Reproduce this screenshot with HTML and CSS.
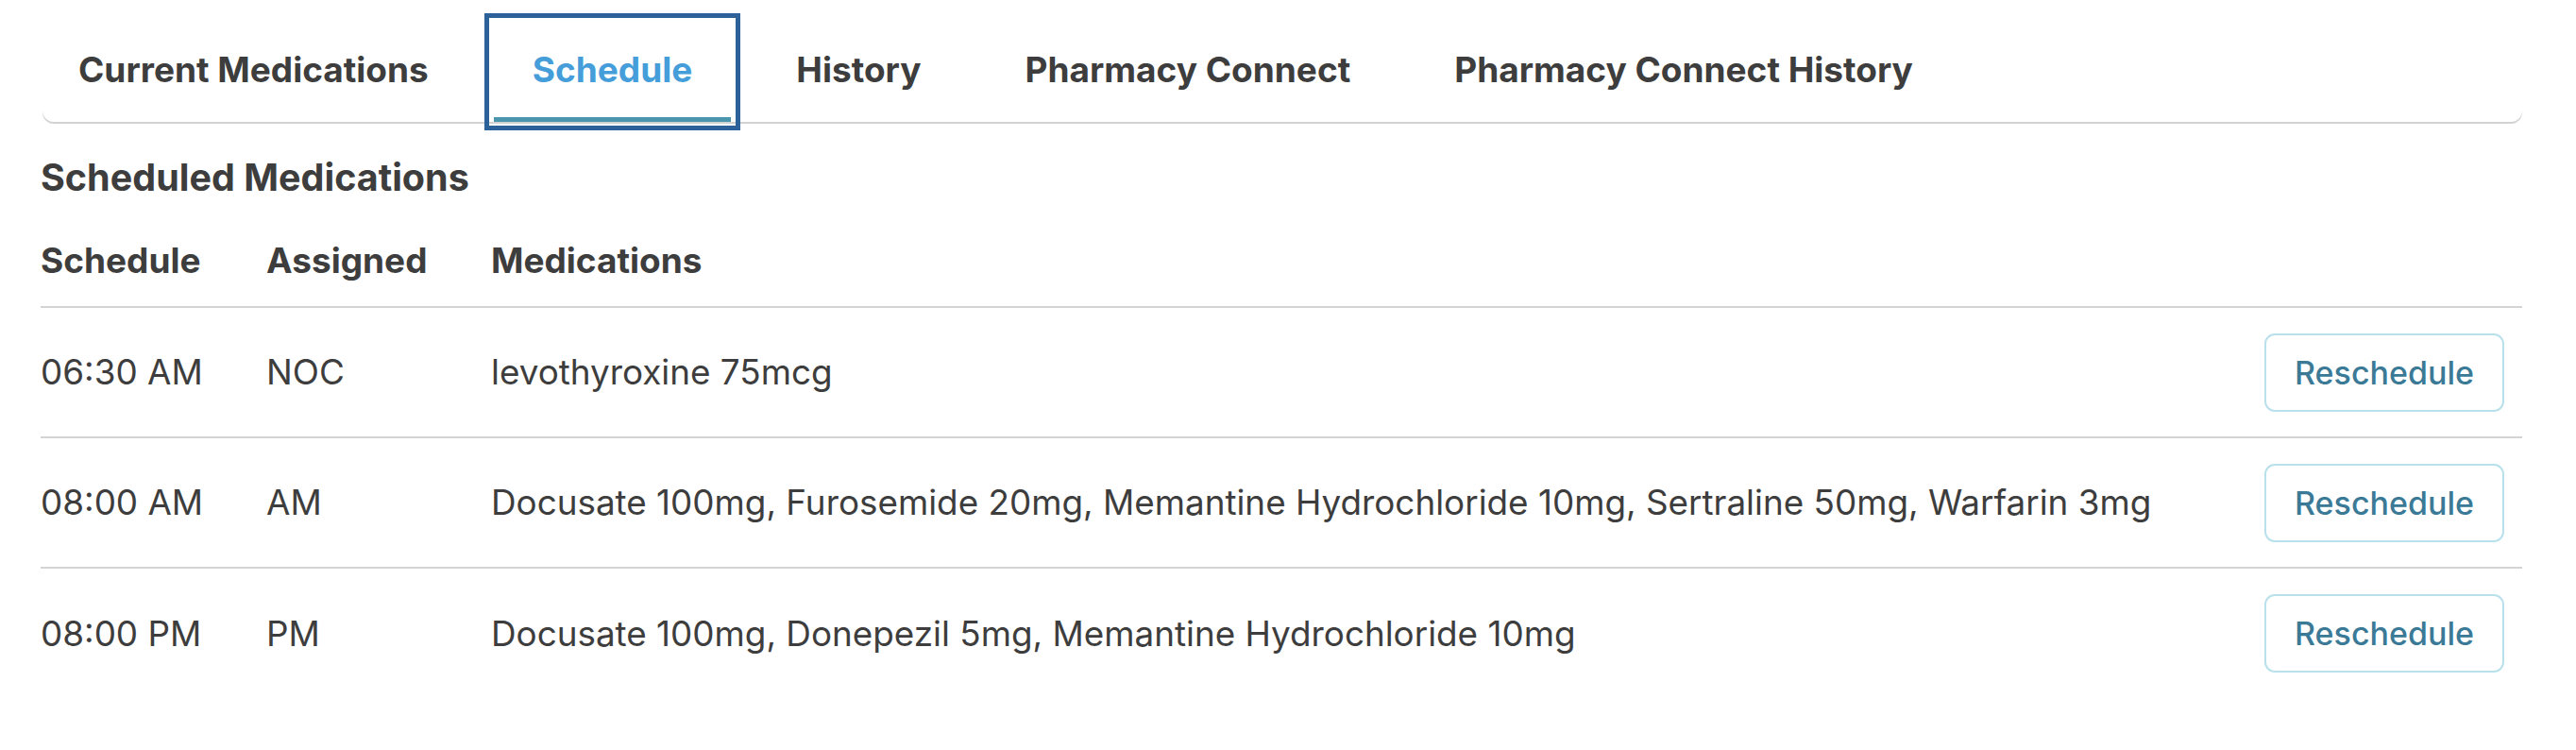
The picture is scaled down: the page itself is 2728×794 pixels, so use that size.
FILE: index.html
```html
<!DOCTYPE html>
<html lang="en">
<head>
<meta charset="utf-8">
<title>Schedule</title>
<link rel="stylesheet" href="styles.css">
</head>
<body>
<div class="page">
  <nav class="tabs">
    <button class="tab">Current Medications</button>
    <button class="tab active">Schedule<span class="tab-bar"></span></button>
    <button class="tab">History</button>
    <button class="tab">Pharmacy Connect</button>
    <button class="tab">Pharmacy Connect History</button>
  </nav>
  <h2 class="section-title">Scheduled Medications</h2>
  <table class="sched">
    <thead>
      <tr>
        <th class="c-time">Schedule</th>
        <th class="c-assigned">Assigned</th>
        <th class="c-meds">Medications</th>
        <th class="c-action"></th>
      </tr>
    </thead>
    <tbody>
      <tr>
        <td>06:30 AM</td>
        <td>NOC</td>
        <td>levothyroxine 75mcg</td>
        <td class="c-action"><button class="btn">Reschedule</button></td>
      </tr>
      <tr>
        <td>08:00 AM</td>
        <td>AM</td>
        <td>Docusate 100mg, Furosemide 20mg, Memantine Hydrochloride 10mg, Sertraline 50mg, Warfarin 3mg</td>
        <td class="c-action"><button class="btn">Reschedule</button></td>
      </tr>
      <tr>
        <td>08:00 PM</td>
        <td>PM</td>
        <td>Docusate 100mg, Donepezil 5mg, Memantine Hydrochloride 10mg</td>
        <td class="c-action"><button class="btn">Reschedule</button></td>
      </tr>
    </tbody>
  </table>
</div>
</body>
</html>
```

FILE: styles.css
```css
* { box-sizing: border-box; }
html, body { margin: 0; padding: 0; background: #ffffff; }
body {
  font-family: Inter, "Noto Sans", sans-serif;
  color: #3d3d3d;
}
.page {
  padding: 19px 57px 40px 43px;
}
.tabs {
  display: flex;
  gap: 18px;
  height: 110px;
  margin-left: 2px;
  border-radius: 0 0 12px 12px;
  box-shadow: 0 2px 0 0 #d2d2d2;
}
.tab {
  position: relative;
  flex: none;
  height: 114px;
  padding: 33px 46px 37px;
  border: 0;
  background: transparent;
  font-family: Inter, "Noto Sans", sans-serif;
  font-size: 37px;
  line-height: 44px;
  font-weight: 700;
  color: #3d3d3d;
  cursor: pointer;
}
.tab:first-child {
  margin-left: -8px;
}
.tab.active {
  color: #459ed9;
  outline: 5px solid #2c6299;
}
.tab-bar {
  position: absolute;
  left: 5px;
  right: 5px;
  bottom: 4px;
  height: 5px;
  background: #4a96ae;
}
.section-title {
  margin: 35px 0 0;
  font-size: 39.5px;
  line-height: 48px;
  font-weight: 700;
  color: #3d3d3d;
}
.sched {
  width: 100%;
  border-collapse: collapse;
  margin-top: 42px;
}
.sched th {
  padding: 0 0 26px;
  text-align: left;
  font-size: 37px;
  line-height: 44px;
  font-weight: 700;
  color: #3d3d3d;
}
.sched td {
  height: 138px;
  padding: 0;
  font-size: 36.85px;
  line-height: 44px;
  font-weight: 400;
  color: #3d3d3d;
  vertical-align: middle;
  border-top: 2px solid #d4d4d4;
}
.c-time { width: 239px; }
.c-assigned { width: 238px; }
.sched .c-action {
  text-align: right;
  padding-right: 19px;
}
.btn {
  width: 254px;
  height: 83px;
  padding: 0 20px;
  border: 2px solid #b9e1ec;
  border-radius: 11px;
  background: #ffffff;
  font-family: Inter, "Noto Sans", sans-serif;
  font-size: 34px;
  font-weight: 500;
  color: #3b7a97;
  cursor: pointer;
}
```
